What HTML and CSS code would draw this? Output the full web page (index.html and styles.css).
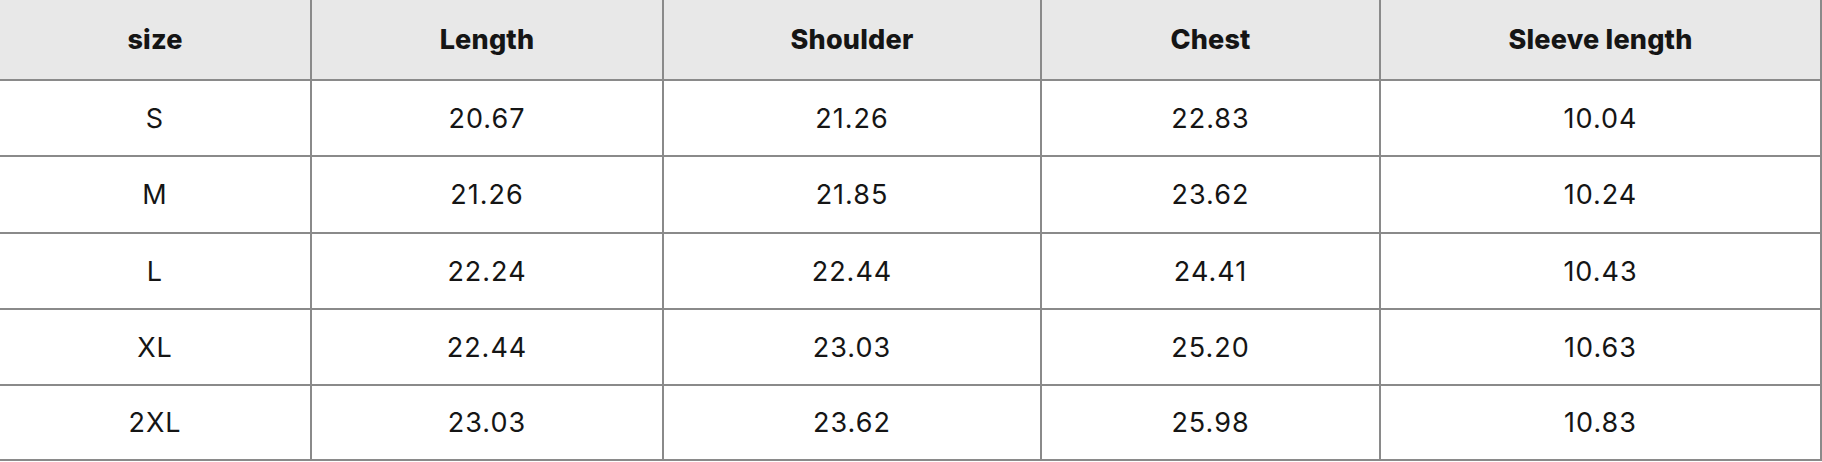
FILE: index.html
```html
<!DOCTYPE html>
<html lang="en">
<head>
<meta charset="utf-8">
<title>Size chart</title>
<link rel="stylesheet" href="styles.css">
</head>
<body>
<div class="chart" role="table">
  <div class="cell head" role="columnheader">size</div>
  <div class="cell head" role="columnheader">Length</div>
  <div class="cell head" role="columnheader">Shoulder</div>
  <div class="cell head" role="columnheader">Chest</div>
  <div class="cell head" role="columnheader">Sleeve length</div>

  <div class="cell">S</div><div class="cell">20.67</div><div class="cell">21.26</div><div class="cell">22.83</div><div class="cell">10.04</div>
  <div class="cell">M</div><div class="cell">21.26</div><div class="cell">21.85</div><div class="cell">23.62</div><div class="cell">10.24</div>
  <div class="cell">L</div><div class="cell">22.24</div><div class="cell">22.44</div><div class="cell">24.41</div><div class="cell">10.43</div>
  <div class="cell">XL</div><div class="cell">22.44</div><div class="cell">23.03</div><div class="cell">25.20</div><div class="cell">10.63</div>
  <div class="cell">2XL</div><div class="cell">23.03</div><div class="cell">23.62</div><div class="cell">25.98</div><div class="cell">10.83</div>
</div>
</body>
</html>
```

FILE: styles.css
```css
html, body {
  margin: 0;
  padding: 0;
  background: #ffffff;
}

.chart {
  display: grid;
  grid-template-columns: 312px 352px 378px 339px 441px;
  grid-template-rows: 81px 76px 77px 76px 76px 75px;
  width: 1822px;
  font-family: "Inter", "Liberation Sans", sans-serif;
  color: #151515;
}

.cell {
  box-sizing: border-box;
  display: flex;
  align-items: center;
  justify-content: center;
  border-right: 2px solid #8a8a8a;
  border-bottom: 2px solid #8a8a8a;
  font-size: 27px;
  font-weight: 400;
  letter-spacing: 1px;
}

.head {
  background: #e8e8e8;
  font-weight: 800;
  letter-spacing: 0.2px;
}
```
